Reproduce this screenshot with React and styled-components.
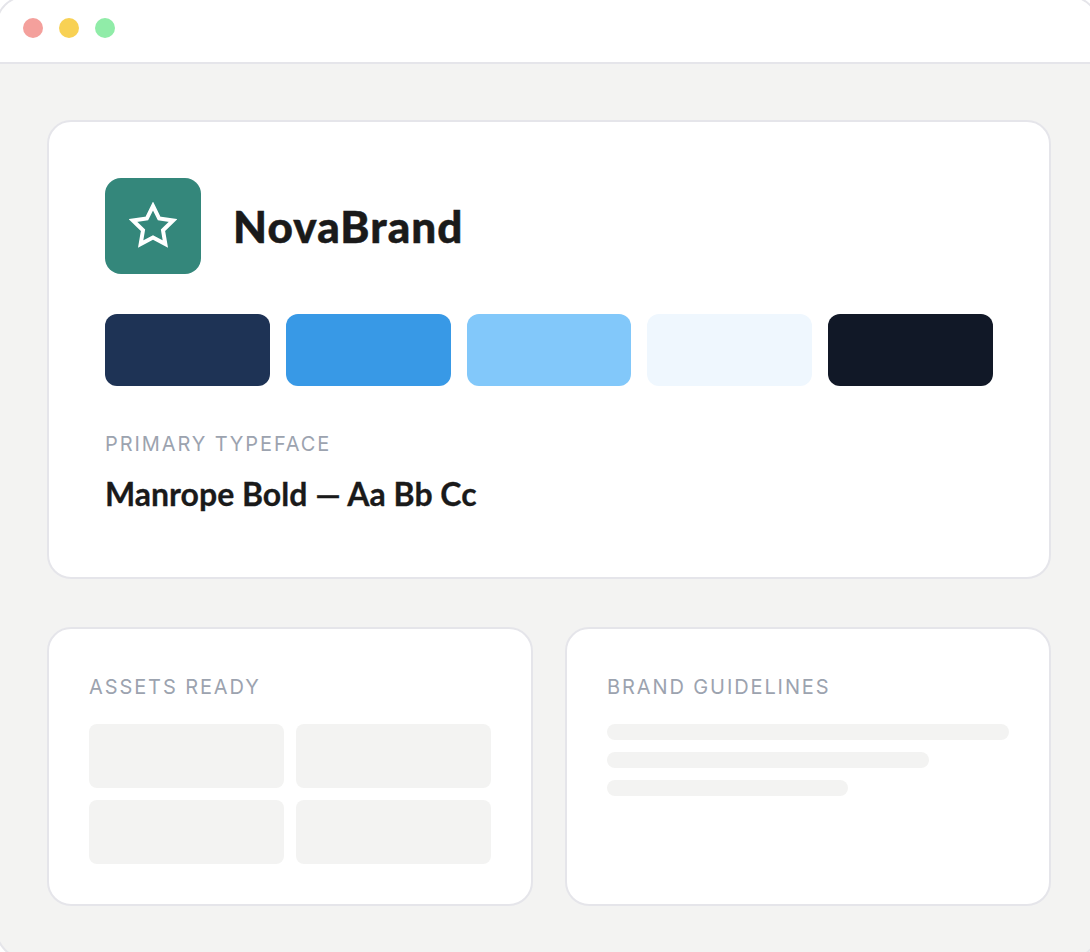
import React from 'react';
import styled, { createGlobalStyle } from 'styled-components';

const GlobalStyle = createGlobalStyle`
  html, body {
    margin: 0;
    padding: 0;
    height: 100%;
    overflow: hidden;
    background: #ffffff;
  }
`;

// the window is a little larger than the viewport, so its corners get clipped
const Window = styled.div`
  box-sizing: border-box;
  width: 1105px;
  height: 965px;
  margin: -5px 0 0 -5px;
  background: #f3f3f2;
  border: 2px solid #e5e5ea;
  border-radius: 32px;
  overflow: hidden;
  font-family: Inter, sans-serif;
`;

const TitleBar = styled.div`
  box-sizing: border-box;
  height: 67px;
  padding: 0 0 3px 26px;
  background: #ffffff;
  border-bottom: 2px solid #e5e5ea;
  display: flex;
  align-items: center;
  gap: 16px;
`;

const Dot = styled.span`
  width: 20px;
  height: 20px;
  border-radius: 50%;
  background: ${(p) => p.$color};
`;

const Content = styled.div`
  padding: 56px 47px 0 50px;
  display: flex;
  flex-direction: column;
  gap: 48px;
`;

const Card = styled.div`
  box-sizing: border-box;
  background: #ffffff;
  border: 2px solid #e5e5ea;
  border-radius: 24px;
  padding: ${(p) => p.$padding};
`;

const BrandRow = styled.div`
  display: flex;
  align-items: center;
  gap: 32px;
  margin-bottom: 40px;
`;

const LogoMark = styled.div`
  width: 96px;
  height: 96px;
  border-radius: 16px;
  background: #34877b;
  display: flex;
  align-items: center;
  justify-content: center;
`;

const BrandName = styled.div`
  font-family: Lato, sans-serif;
  font-size: 44px;
  font-weight: 900;
  letter-spacing: 1.1px;
  -webkit-text-stroke: 0.5px #1a1a1a;
  color: #1a1a1a;
`;

const Swatches = styled.div`
  display: grid;
  grid-template-columns: repeat(5, 1fr);
  gap: 16px;
  margin-bottom: 44px;
`;

const Swatch = styled.div`
  height: 72px;
  border-radius: 12px;
  background: ${(p) => p.$color};
`;

const Label = styled.div`
  font-size: 20px;
  line-height: 28px;
  letter-spacing: 1.9px;
  color: #9ca3af;
  margin-bottom: ${(p) => p.$gap};
`;

const TypefaceSample = styled.div`
  font-family: Lato, sans-serif;
  font-size: 32px;
  line-height: 40px;
  font-weight: 700;
  -webkit-text-stroke: 0.3px #1a1a1a;
  color: #1a1a1a;
`;

const BottomRow = styled.div`
  display: grid;
  grid-template-columns: 1fr 1fr;
  gap: 32px;
`;

const AssetGrid = styled.div`
  display: grid;
  grid-template-columns: 1fr 1fr;
  gap: 12px;
`;

const AssetTile = styled.div`
  height: 64px;
  border-radius: 8px;
  background: #f3f3f2;
`;

const Lines = styled.div`
  display: flex;
  flex-direction: column;
  gap: 12px;
`;

const Line = styled.div`
  height: 16px;
  border-radius: 8px;
  background: #f3f3f2;
  width: ${(p) => p.$width};
`;

const dots = ['#f4a09c', '#f8d154', '#90eca8'];
const swatches = ['#1e3355', '#3899e6', '#82c8fa', '#eff7fe', '#111827'];

export default function App() {
  return (
    <>
      <GlobalStyle />
      <Window>
        <TitleBar>
          {dots.map((c) => (
            <Dot key={c} $color={c} />
          ))}
        </TitleBar>
        <Content>
          <Card $padding="56px 56px 63px">
            <BrandRow>
              <LogoMark>
                <svg width="48" height="48" viewBox="0 0 24 24" fill="none" stroke="#fff" strokeWidth="2">
                  <polygon points="12 2 15.09 8.26 22 9.27 17 14.14 18.18 21.02 12 17.77 5.82 21.02 7 14.14 2 9.27 8.91 8.26 12 2" />
                </svg>
              </LogoMark>
              <BrandName>NovaBrand</BrandName>
            </BrandRow>
            <Swatches>
              {swatches.map((c) => (
                <Swatch key={c} $color={c} />
              ))}
            </Swatches>
            <Label $gap="16px">PRIMARY TYPEFACE</Label>
            <TypefaceSample>Manrope Bold — Aa Bb Cc</TypefaceSample>
          </Card>
          <BottomRow>
            <Card $padding="44px 40px 40px">
              <Label $gap="23px">ASSETS READY</Label>
              <AssetGrid>
                <AssetTile />
                <AssetTile />
                <AssetTile />
                <AssetTile />
              </AssetGrid>
            </Card>
            <Card $padding="44px 40px 40px">
              <Label $gap="23px">BRAND GUIDELINES</Label>
              <Lines>
                <Line $width="100%" />
                <Line $width="80%" />
                <Line $width="60%" />
              </Lines>
            </Card>
          </BottomRow>
        </Content>
      </Window>
    </>
  );
}
